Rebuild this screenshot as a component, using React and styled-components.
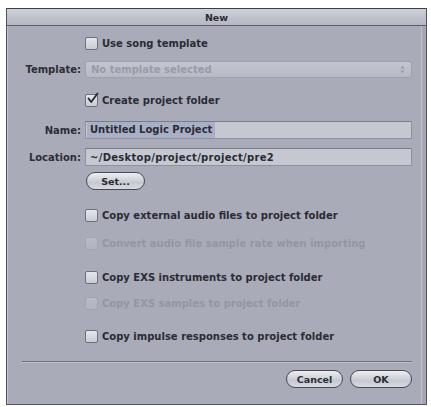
import React, { useState } from "react";
import styled, { createGlobalStyle } from "styled-components";

const GlobalStyle = createGlobalStyle`
  html, body {
    margin: 0;
    padding: 0;
    background: #ffffff;
  }
  body {
    font-family: "DejaVu Sans", "Liberation Sans", sans-serif;
  }
`;

const options = [
  { key: "copyAudio", label: "Copy external audio files to project folder", top: 16 },
  { key: "convertRate", label: "Convert audio file sample rate when importing", top: 10, disabled: true },
  { key: "copyExs", label: "Copy EXS instruments to project folder", top: 16 },
  { key: "copySamples", label: "Copy EXS samples to project folder", top: 8, disabled: true },
  { key: "copyImpulse", label: "Copy impulse responses to project folder", top: 15 },
];

function CheckBox({ checked, disabled, onChange }) {
  return (
    <Box $disabled={disabled} onClick={() => !disabled && onChange(!checked)}>
      {checked && (
        <svg width="13" height="13" viewBox="0 0 13 13">
          <path
            d="M2.5 6.5 L5.2 10 L11.5 1.5"
            fill="none"
            stroke="#2b2c36"
            strokeWidth="1.9"
            strokeLinecap="round"
            strokeLinejoin="round"
          />
        </svg>
      )}
    </Box>
  );
}

function App() {
  const [useTemplate, setUseTemplate] = useState(false);
  const [createFolder, setCreateFolder] = useState(true);
  const [checks, setChecks] = useState({});
  const [name] = useState("Untitled Logic Project");

  return (
    <>
      <GlobalStyle />
      <Window>
        <TitleBar>New</TitleBar>
        <Body>
          <Row $top={8}>
            <Label />
            <Check>
              <CheckBox checked={useTemplate} onChange={setUseTemplate} />
              <CheckText>Use song template</CheckText>
            </Check>
          </Row>
          <Row $top={8}>
            <Label>Template:</Label>
            <Popup>
              <PopupText>No template selected</PopupText>
              <Arrows>
                <svg width="5" height="9" viewBox="0 0 5 9">
                  <path d="M0.5 3.5 L2.5 1 L4.5 3.5Z M0.5 5.5 L2.5 8 L4.5 5.5Z" fill="#9497a5" />
                </svg>
              </Arrows>
            </Popup>
          </Row>
          <Row $top={13}>
            <Label />
            <Check>
              <CheckBox checked={createFolder} onChange={setCreateFolder} />
              <CheckText>Create project folder</CheckText>
            </Check>
          </Row>
          <Row $top={12}>
            <Label>Name:</Label>
            <Field>
              <Selected>{name}</Selected>
            </Field>
          </Row>
          <Row $top={9}>
            <Label>Location:</Label>
            <Field $spacing={0.3}>~/Desktop/project/project/pre2</Field>
          </Row>
          <Row $top={6}>
            <Label />
            <PillButton $width={59}>Set...</PillButton>
          </Row>
          {options.map((o) => (
            <Row key={o.key} $top={o.top}>
              <Label />
              <Check>
                <CheckBox
                  checked={!!checks[o.key]}
                  disabled={o.disabled}
                  onChange={(v) => setChecks({ ...checks, [o.key]: v })}
                />
                <CheckText $disabled={o.disabled}>{o.label}</CheckText>
              </Check>
            </Row>
          ))}
          <Separator />
          <Footer>
            <PillButton $width={57}>Cancel</PillButton>
            <PillButton $width={62}>OK</PillButton>
          </Footer>
        </Body>
      </Window>
    </>
  );
}

const Window = styled.div`
  margin: 8px 0 0 6px;
  width: 421px;
  height: 397px;
  box-sizing: border-box;
  border: 1px solid #4f525c;
  border-top-color: #3d3f47;
  background: #a9acb8;
  box-shadow: inset 1px 0 0 #c4c6cf, inset -4px 0 0 #a4a7b3, inset -5px 0 0 #c0c3cc;
  display: flex;
  flex-direction: column;
`;

const TitleBar = styled.div`
  height: 16px;
  border-bottom: 1px solid #5c5f6a;
  background: linear-gradient(#cfd1d8, #bfc2cb 55%, #b5b8c2);
  color: #2a2b33;
  font-size: 9.5px;
  font-weight: bold;
  text-align: center;
  line-height: 17px;
`;

const Body = styled.div`
  flex: 1;
  display: flex;
  flex-direction: column;
  padding: 0 14px 0 0;
`;

const Row = styled.div`
  display: flex;
  align-items: center;
  height: 18px;
  margin-top: ${(p) => p.$top}px;
`;

const Label = styled.div`
  width: 74px;
  flex: none;
  padding-right: 4px;
  text-align: right;
  font-size: 10px;
  font-weight: bold;
  color: #2c2d36;
  white-space: nowrap;
`;

const Check = styled.label`
  display: flex;
  align-items: center;
  gap: 4px;
  cursor: default;
`;

const Box = styled.div`
  width: 13px;
  height: 13px;
  box-sizing: border-box;
  border: 1px solid ${(p) => (p.$disabled ? "#a2a5b1" : "#6d707c")};
  border-radius: 2px;
  background: ${(p) =>
    p.$disabled
      ? "linear-gradient(#b8bbc5, #b1b4bf)"
      : "linear-gradient(#e6e7ec, #c9ccd4)"};
  position: relative;
  svg {
    position: absolute;
    left: 0px;
    top: -3px;
  }
`;

const CheckText = styled.span`
  font-size: 10px;
  font-weight: bold;
  color: ${(p) => (p.$disabled ? "#9396a4" : "#2a2b34")};
  white-space: nowrap;
`;

const Popup = styled.div`
  flex: 1;
  height: 17px;
  box-sizing: border-box;
  border: 1px solid #9ea1ad;
  border-radius: 3px;
  background: linear-gradient(#c3c6ce, #b7bac4);
  display: flex;
  align-items: center;
  padding: 0 6px 0 5px;
`;

const PopupText = styled.span`
  flex: 1;
  font-size: 10px;
  font-weight: bold;
  color: #989ba9;
`;

const Arrows = styled.span`
  display: flex;
  align-items: center;
`;

const Field = styled.div`
  flex: 1;
  height: 18px;
  box-sizing: border-box;
  border: 1px solid #8f929e;
  border-top-color: #7a7d89;
  background: #c5c8d1;
  display: flex;
  align-items: center;
  padding: 0 4px;
  font-size: 10px;
  font-weight: bold;
  letter-spacing: ${(p) => p.$spacing || 0}px;
  color: #2a2b34;
`;

const Selected = styled.span`
  background: #a9b0c6;
  margin-left: -3px;
  padding: 1px 3px;
  line-height: 14px;
`;

const PillButton = styled.button`
  width: ${(p) => p.$width}px;
  height: 18px;
  box-sizing: border-box;
  border: 1.5px solid #474a55;
  border-radius: 9px;
  background: linear-gradient(#eeeff2, #c6c9d1 60%, #d8dae0);
  font-family: inherit;
  font-size: 9.5px;
  font-weight: bold;
  color: #2a2b34;
  padding: 0;
  margin-left: 1px;
`;

const Separator = styled.div`
  margin: 16px 0 0 15px;
  height: 1px;
  background: #6e717d;
  box-shadow: 0 1px 0 #bfc2cb;
`;

const Footer = styled.div`
  display: flex;
  justify-content: flex-end;
  gap: 6px;
  margin-top: 8px;
`;

export default App;
